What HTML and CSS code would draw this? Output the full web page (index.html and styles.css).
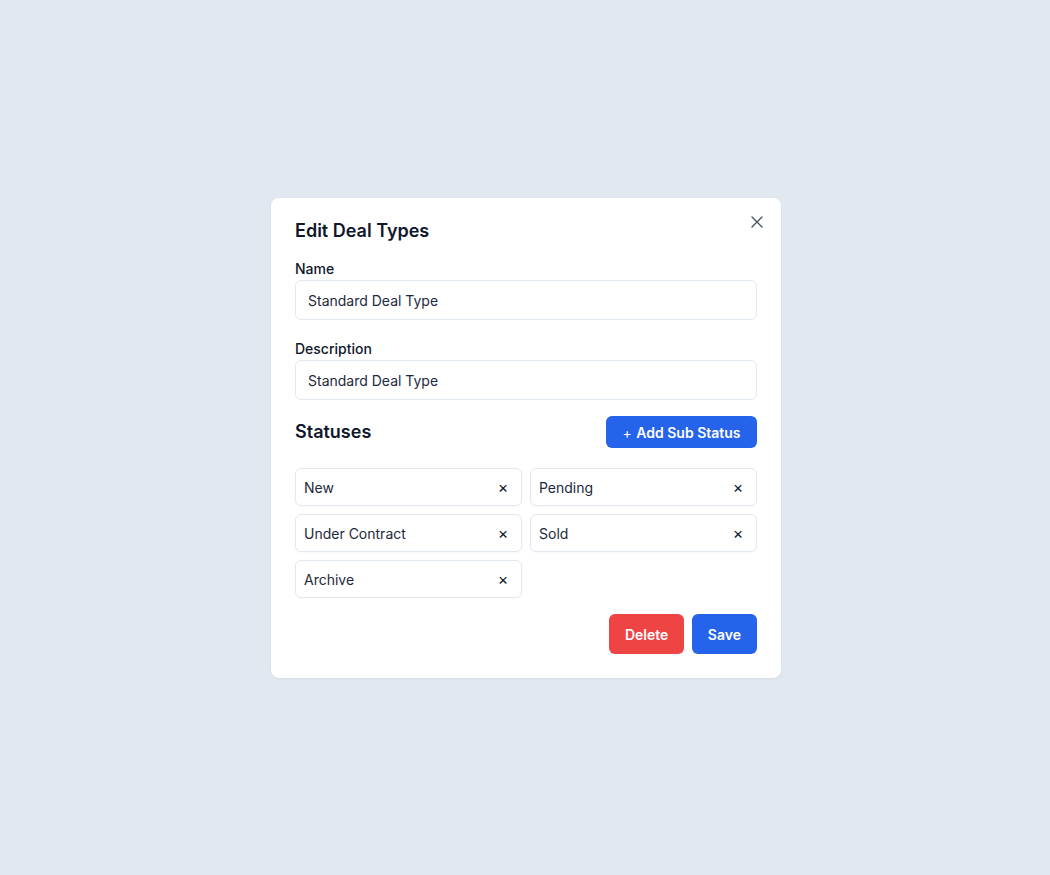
FILE: index.html
```html
<!DOCTYPE html>
<html lang="en">
<head>
    <meta charset="UTF-8">
    <meta name="viewport" content="width=device-width, initial-scale=1.0">
    <title>Edit Deal Types</title>
    <link rel="stylesheet" href="styles.css">
</head>
<body>
    <!-- modal -->
    <div class="modal">
        <button class="close-button" aria-label="Close">
            <svg width="12" height="12" viewBox="0 0 12 12" fill="none" stroke="currentColor" stroke-width="1.4" stroke-linecap="round">
                <path d="M1 1L11 11M11 1L1 11"/>
            </svg>
        </button>

        <h2 class="modal-title">Edit Deal Types</h2>

        <div class="field">
            <label for="dealName">Name</label>
            <input id="dealName" type="text" value="Standard Deal Type">
        </div>

        <div class="field">
            <label for="dealDesc">Description</label>
            <input id="dealDesc" type="text" value="Standard Deal Type">
        </div>

        <!-- statuses -->
        <div class="status-header">
            <h3>Statuses</h3>
            <button class="btn btn-blue add-button"><span class="plus">+</span> Add Sub Status</button>
        </div>

        <ul class="status-list">
            <li class="status-chip"><span>New</span><button class="chip-remove">×</button></li>
            <li class="status-chip"><span>Pending</span><button class="chip-remove">×</button></li>
            <li class="status-chip"><span>Under Contract</span><button class="chip-remove">×</button></li>
            <li class="status-chip"><span>Sold</span><button class="chip-remove">×</button></li>
            <li class="status-chip"><span>Archive</span><button class="chip-remove">×</button></li>
        </ul>

        <div class="modal-footer">
            <button class="btn btn-red">Delete</button>
            <button class="btn btn-blue">Save</button>
        </div>
    </div>
</body>
</html>
```

FILE: styles.css
```css
/* common */
* {
    margin: 0;
    padding: 0;
    box-sizing: border-box;
}

body {
    font-family: Inter, "Noto Sans", sans-serif;
    background-color: #e2e8f0;
    color: #0f172a;
    min-height: 875px;
    padding-top: 198px;
    padding-left: 2px;
}

/* modal */
.modal {
    position: relative;
    width: 510px;
    margin: 0 auto;
    padding: 19px 24px 24px;
    background-color: white;
    border-radius: 8px;
    box-shadow: 0 1px 3px rgba(0, 0, 0, 0.06);
}

.close-button {
    position: absolute;
    top: 18px;
    right: 18px;
    width: 12px;
    height: 12px;
    border: none;
    background: none;
    color: #475569;
    cursor: pointer;
    display: flex;
}

.modal-title {
    font-size: 18px;
    font-weight: 600;
    line-height: 28px;
    margin-bottom: 14px;
}

.field {
    margin-bottom: 19px;
}

.field label {
    display: block;
    font-size: 14px;
    font-weight: 500;
    line-height: 20px;
    margin-bottom: 1px;
    color: #0f172a;
}

.field input {
    display: block;
    width: 100%;
    height: 40px;
    padding: 0 12px;
    font-family: inherit;
    font-size: 14px;
    color: #1e293b;
    border: 1px solid #e2e8f0;
    border-radius: 6px;
    outline: none;
}

/* statuses */
.status-header {
    display: flex;
    justify-content: space-between;
    align-items: center;
    margin-top: -3px;
    margin-bottom: 20px;
}

.status-header h3 {
    font-size: 18px;
    font-weight: 600;
    line-height: 26px;
    margin-top: -1px;
}

.btn {
    border: none;
    border-radius: 6px;
    color: white;
    font-family: inherit;
    font-size: 14px;
    font-weight: 600;
    cursor: pointer;
    height: 40px;
    padding: 0 16px;
}

.btn-blue {
    background-color: #2563eb;
}

.btn-red {
    background-color: #ef4444;
    padding: 0 15.5px;
}

.add-button {
    height: 32px;
    width: 151px;
    padding: 0;
}

.plus {
    font-weight: 400;
    margin-right: 1px;
}

.status-list {
    list-style-type: none;
    display: grid;
    grid-template-columns: 1fr 1fr;
    gap: 8px;
}

.status-chip {
    display: flex;
    justify-content: space-between;
    align-items: center;
    height: 38px;
    padding: 0 11px 0 8px;
    font-size: 14px;
    color: #1e293b;
    border: 1px solid #e2e8f0;
    border-radius: 6px;
    box-shadow: 0 1px 2px rgba(0, 0, 0, 0.03);
}

.chip-remove {
    border: none;
    background: none;
    font-family: inherit;
    font-size: 16px;
    color: #0f172a;
    width: 14px;
    cursor: pointer;
}

.modal-footer {
    display: flex;
    justify-content: flex-end;
    gap: 8px;
    margin-top: 16px;
}
```
